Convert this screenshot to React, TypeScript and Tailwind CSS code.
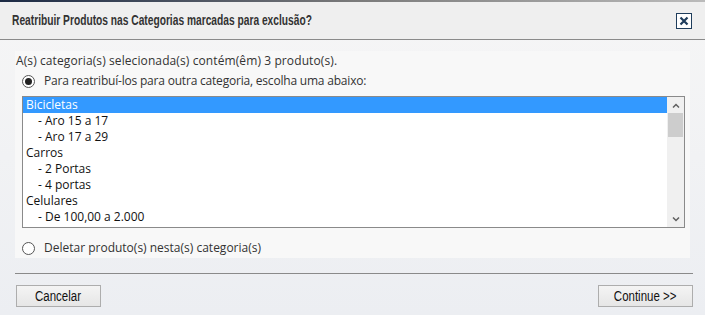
import React from 'react';

const items = [
  { label: 'Bicicletas', sub: false },
  { label: '- Aro 15 a 17', sub: true },
  { label: '- Aro 17 a 29', sub: true },
  { label: 'Carros', sub: false },
  { label: '- 2 Portas', sub: true },
  { label: '- 4 portas', sub: true },
  { label: 'Celulares', sub: false },
  { label: '- De 100,00 a 2.000', sub: true },
];

function Radio({ checked }: { checked?: boolean }) {
  return (
    <span className="w-[13px] h-[13px] rounded-full border border-[#555] bg-white flex items-center justify-center shrink-0">
      {checked && <span className="w-[7px] h-[7px] rounded-full bg-[#222]" />}
    </span>
  );
}

// narrow face (Arial Narrow look) made from Liberation Sans
function Narrow({ children, className = '' }: { children: React.ReactNode; className?: string }) {
  return (
    <span className={"inline-block whitespace-nowrap font-['Liberation_Sans',Arial,sans-serif] " + className}>
      {children}
    </span>
  );
}

export default function App() {
  const [selected, setSelected] = React.useState(0);
  const [mode, setMode] = React.useState<'move' | 'delete'>('move');

  return (
    <div className="w-[705px] h-[315px] flex flex-col bg-gradient-to-b from-[#f6f6f6] to-[#eceef2] text-[#333] font-['Open_Sans',sans-serif] overflow-hidden">
      {/* top strip */}
      <div className="h-[2px] bg-gradient-to-r from-[#1c2a44] via-[#7a7a7a] to-[#bbbbbb]" />

      {/* header */}
      <div className="h-[38px] flex items-center justify-between pl-[12px] pr-[13px] bg-[#efefef] border-b border-[#8a8a8a]">
        <Narrow className="origin-left scale-x-[0.73] font-bold text-[14px] text-[#333]">
          Reatribuir Produtos nas Categorias marcadas para exclusão?
        </Narrow>
        <button className="w-[16px] h-[16px] border-[1.5px] border-[#1f3d5c] bg-white flex items-center justify-center">
          <svg width="10" height="10" viewBox="0 0 10 10">
            <path d="M1.5 1.5 L8.5 8.5 M8.5 1.5 L1.5 8.5" stroke="#1f3d5c" strokeWidth="2.2" />
          </svg>
        </button>
      </div>

      {/* body */}
      <div className="mx-[15px] mt-[11px] bg-[#f8f8f8] px-[1px] pt-[2px] pb-[2px] text-[12px]">
        <div className="leading-[16px] tracking-[0.1px]">A(s) categoria(s) selecionada(s) contém(êm) 3 produto(s).</div>
        <label className="flex items-center gap-[9px] pl-[6px] mt-[4px] leading-[16px] cursor-pointer" onClick={() => setMode('move')}>
          <Radio checked={mode === 'move'} />
          <span className="tracking-[-0.2px]">Para reatribuí-los para outra categoria, escolha uma abaixo:</span>
        </label>

        <div className="ml-[6px] mr-[4px] mt-[7px] h-[132px] border border-[#8a8a8a] bg-white flex">
          <ul className="flex-1">
            {items.map((it, i) => (
              <li
                key={i}
                onClick={() => setSelected(i)}
                className={
                  'h-[16px] leading-[16px] ' +
                  (it.sub ? 'pl-[15px] ' : 'pl-[3px] ') +
                  (selected === i ? 'bg-[#3399ff] text-white' : 'text-[#111]')
                }
              >
                {it.label}
              </li>
            ))}
          </ul>
          <div className="w-[17px] bg-[#f0f0f0] flex flex-col">
            <div className="h-[16px] flex items-center justify-center">
              <svg width="8" height="5" viewBox="0 0 8 5">
                <path d="M1 4.5 L4 1.5 L7 4.5" stroke="#606060" strokeWidth="1.5" fill="none" />
              </svg>
            </div>
            <div className="h-[24px] mx-[1px] bg-[#cdcdcd]" />
            <div className="flex-1" />
            <div className="h-[16px] flex items-center justify-center">
              <svg width="8" height="5" viewBox="0 0 8 5">
                <path d="M1 0.5 L4 3.5 L7 0.5" stroke="#606060" strokeWidth="1.5" fill="none" />
              </svg>
            </div>
          </div>
        </div>

        <label className="flex items-center gap-[9px] pl-[6px] mt-[12px] leading-[16px] cursor-pointer" onClick={() => setMode('delete')}>
          <Radio checked={mode === 'delete'} />
          <span>Deletar produto(s) nesta(s) categoria(s)</span>
        </label>
      </div>

      {/* divider */}
      <div className="ml-[15px] mr-[12px] mt-[15px] border-t border-[#8a8a8a]" />

      {/* footer */}
      <div className="flex justify-between pl-[16px] pr-[12px] mt-[11px] text-[14px] text-[#111]">
        <button className="w-[85px] h-[22px] border border-[#adadad] bg-gradient-to-b from-[#f4f4f4] to-[#e6e6e6] flex items-center justify-center">
          <Narrow className="scale-x-[0.82]">Cancelar</Narrow>
        </button>
        <button className="w-[95px] h-[22px] border border-[#adadad] bg-gradient-to-b from-[#f4f4f4] to-[#e6e6e6] flex items-center justify-center">
          <Narrow className="scale-x-[0.82]">Continue &gt;&gt;</Narrow>
        </button>
      </div>
    </div>
  );
}
